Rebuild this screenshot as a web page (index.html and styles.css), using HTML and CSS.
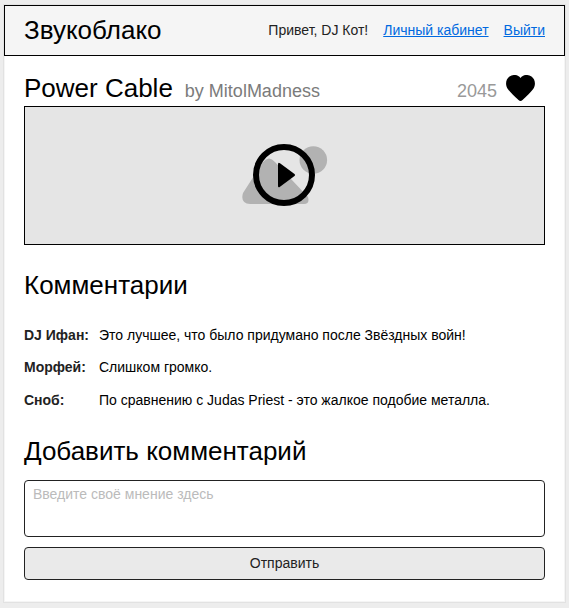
FILE: index.html
```html
<!DOCTYPE html>
<html lang="ru">
<head>
<meta charset="utf-8">
<title>Звукоблако</title>
<link rel="stylesheet" href="styles.css">
</head>
<body>
<div class="page">
  <header class="header">
    <div class="brand">Звукоблако</div>
    <nav class="nav">
      <span>Привет, DJ Кот!</span>
      <a href="#">Личный кабинет</a>
      <a href="#">Выйти</a>
    </nav>
  </header>
  <main class="content">
    <div class="track">
      <h1 class="title">Power Cable</h1>
      <span class="author">by MitolMadness</span>
      <span class="likes">2045</span>
      <svg class="heart" viewBox="0 0 29 26"><path d="M14.5 3C17-.7 22-.8 25.500 1.500C29.500 4.500 30 10 27 14.200C24.500 17.500 20.500 21 16.500 25Q14.500 26.800 12.500 25C8.500 21 4.500 17.500 2 14.200C-1 10-.5 4.500 3.500 1.500C7-.8 12-.7 14.500 3Z"/></svg>
    </div>
    <div class="player">
      <svg class="cover" viewBox="0 0 86 62">
        <circle cx="71.300" cy="16" r="13.800" fill="#b2b2b2"/>
        <path d="M21 18Q27 11 33 18L66 53Q68 60 62 60H8Q-2 59 1 49Z" fill="#b2b2b2"/>
        <circle cx="42" cy="31" r="28" fill="none" stroke="#000" stroke-width="6"/>
        <path d="M36 20.200Q36 17.800 38 19.200L52.500 30Q53.800 31 52.500 32L38 42.800Q36 44.200 36 41.800Z"/>
      </svg>
    </div>
    <h2 class="heading">Комментарии</h2>
    <dl class="comments">
      <dt>DJ Ифан:</dt><dd>Это лучшее, что было придумано после Звёздных войн!</dd>
      <dt>Морфей:</dt><dd>Слишком громко.</dd>
      <dt>Сноб:</dt><dd>По сравнению с Judas Priest - это жалкое подобие металла.</dd>
    </dl>
    <h2 class="heading">Добавить комментарий</h2>
    <form class="form">
      <textarea class="input" placeholder="Введите своё мнение здесь"></textarea>
      <button class="submit" type="button">Отправить</button>
    </form>
  </main>
</div>
</body>
</html>
```
FILE: styles.css
```css
* { box-sizing: border-box; }
body {
  margin: 0;
  padding: 5px 4px 0;
  height: 608px;
  background: #ededed;
  color: #222;
  font: 14px/20px "Liberation Sans", Arial, sans-serif;
}
.page {
  height: 597px;
  background: #fff;
  box-shadow: inset 0 0 0 1px #f5f5f5, 0 0 0 1px #e2e2e2;
}
.header {
  position: relative;
  height: 51px;
  padding: 0 19px 2px;
  display: flex;
  justify-content: space-between;
  align-items: center;
  border: 1px solid #000;
  background: #f5f5f5;
}
.brand { color: #000; font-size: 26px; line-height: 30px; }
.nav { display: flex; gap: 15px; }
.nav a { color: #0069e0; }
.content { padding: 15px 20px 0; }
.track {
  height: 35px;
  display: flex;
  align-items: baseline;
}
.title, .heading {
  margin: 0;
  color: #000;
  font-size: 26px;
  line-height: 34px;
  font-weight: 400;
}
.author { margin-left: 12px; font-size: 18px; color: #7b7b7b; }
.likes { margin-left: auto; font-size: 18px; color: #999; }
.heart {
  width: 29px;
  height: 26px;
  margin: 4px 10px 0 9px;
  align-self: flex-start;
}
.player {
  height: 139px;
  padding-bottom: 1px;
  display: flex;
  justify-content: center;
  align-items: center;
  border: 1px solid #000;
  background: #e5e5e5;
  margin-bottom: 23px;
}
.cover { width: 86px; height: 62px; }
.comments {
  margin: 23px 0 24px;
  display: grid;
  grid-template-columns: 75px 1fr;
  grid-template-rows: 32px 33px 20px;
}
.comments dt { font-weight: 700; }
.comments dd { margin: 0; color: #000; }
.form { margin-top: 12px; }
.input, .submit {
  display: block;
  width: 100%;
  border: 1px solid #222;
  border-radius: 4px;
  font: inherit;
  color: #222;
}
.input { height: 57px; padding: 3px 8px; resize: none; background: #fff; }
.input::placeholder { color: #bbb; opacity: 1; }
.submit { height: 33px; margin-top: 10px; padding: 0 0 2px; background: #eaeaea; }
```
